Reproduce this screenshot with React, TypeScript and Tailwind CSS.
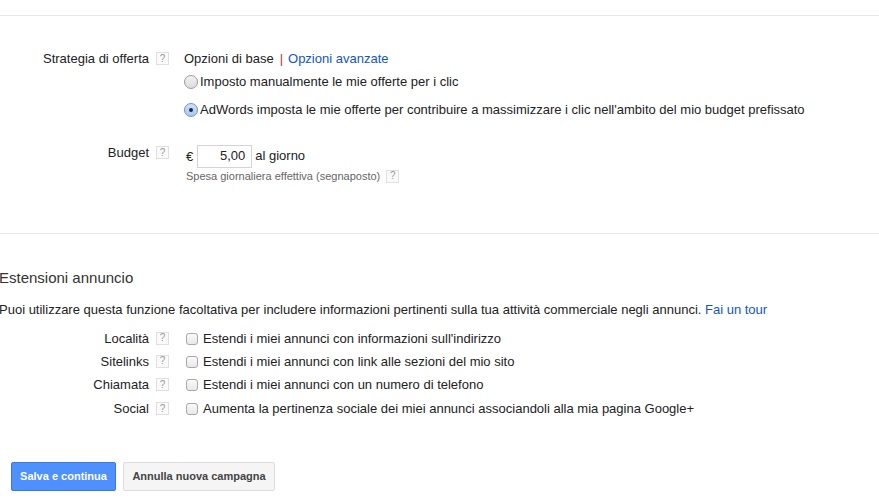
const Help = ({ className = "" }: { className?: string }) => (
  <span className={"flex h-[13px] w-[13px] shrink-0 items-center justify-center border border-[#e0e0e0] bg-[#fafafa] text-[10px] leading-none text-[#999] " + className}>?</span>
);

const Radio = ({ checked = false }: { checked?: boolean }) => (
  <span className={"flex h-[14px] w-[14px] shrink-0 items-center justify-center rounded-full border " + (checked ? "border-[#6f93c4] bg-gradient-to-b from-[#cfe0f7] to-[#a9c8f0]" : "border-[#9a9a9a] bg-gradient-to-b from-[#f2f2f2] to-[#dcdcdc]")}>
    {checked && <span className="h-[4px] w-[4px] rounded-full bg-[#1a2a44]" />}
  </span>
);

const Check = () => (
  <span className="h-[12px] w-[12px] shrink-0 rounded-[3px] border border-[#a8a8a8] bg-gradient-to-b from-[#fafafa] to-[#e8e8e8]" />
);

const ext = [
  { label: "Località", text: "Estendi i miei annunci con informazioni sull'indirizzo", h: "h-[23px]" },
  { label: "Sitelinks", text: "Estendi i miei annunci con link alle sezioni del mio sito", h: "h-[23px]" },
  { label: "Chiamata", text: "Estendi i miei annunci con un numero di telefono", h: "h-[24px]" },
  { label: "Social", text: "Aumenta la pertinenza sociale dei miei annunci associandoli alla mia pagina Google+", h: "h-[24px]" },
];

export default function App() {
  return (
    <div className="h-[501px] w-[879px] overflow-hidden bg-white text-[13px] leading-[16px] text-[#222]" style={{ fontFamily: '"Liberation Sans", Arial, sans-serif' }}>
      <div className="h-[15px]" />
      <div className="h-[219px] border-b border-[#e8e8e8] border-t pt-[35px]">
        <div className="flex">
          <div className="flex w-[169px] justify-end gap-[7px]">
            <span>Strategia di offerta</span>
            <Help className="mt-px" />
          </div>
          <div className="ml-[15px] flex flex-col">
            <div className="flex">
              <span>Opzioni di base</span>
              <span className="ml-[6px] mr-[5px] text-[#c0392b]">|</span>
              <span className="text-[#1155cc]">Opzioni avanzate</span>
            </div>
            <div className="mt-[7px] flex items-center gap-[2px]"><Radio /><span>Imposto manualmente le mie offerte per i clic</span></div>
            <div className="mt-[12px] flex items-center gap-[2px]"><Radio checked /><span>AdWords imposta le mie offerte per contribuire a massimizzare i clic nell'ambito del mio budget prefissato</span></div>
          </div>
        </div>
        <div className="mt-[27px] flex">
          <div className="flex w-[169px] justify-end gap-[7px]">
            <span>Budget</span>
            <Help className="mt-px" />
          </div>
          <div className="ml-[17px] flex flex-col">
            <div className="flex items-center">
              <span>€</span>
              <span className="ml-[4px] flex h-[23px] w-[55px] items-center justify-end border border-[#d4d4d4] pb-[1px] pr-[6px]">5,00</span>
              <span className="ml-[3px] pb-[2px]">al giorno</span>
            </div>
            <div className="flex items-center gap-[6px] text-[11px] text-[#666]">
              <span>Spesa giornaliera effettiva (segnaposto)</span>
              <Help />
            </div>
          </div>
        </div>
      </div>
      <h2 className="mt-[36px] -ml-px text-[15px] leading-[16px] font-normal text-[#333]">Estensioni annuncio</h2>
      <p className="mt-[16px] -ml-px">Puoi utilizzare questa funzione facoltativa per includere informazioni pertinenti sulla tua attività commerciale negli annunci. <span className="text-[#1155cc]">Fai un tour</span></p>
      <div className="mt-[9px] flex flex-col">
        {ext.map((e) => (
          <div key={e.label} className={"flex items-center " + e.h}>
            <div className="flex w-[169px] justify-end gap-[7px]">
              <span>{e.label}</span>
              <Help className="mt-px" />
            </div>
            <span className="ml-[17px] flex items-center gap-[5px]"><Check /><span>{e.text}</span></span>
          </div>
        ))}
      </div>
      <div className="ml-[11px] mt-[41px] flex gap-[7px] text-[11px] font-bold">
        <button className="h-[29px] w-[105px] rounded-[2px] border border-[#3b78e7] bg-[#4d90fe] pb-[2px] text-white">Salva e continua</button>
        <button className="h-[29px] w-[152px] rounded-[2px] border border-[#dcdcdc] bg-[#f5f5f5] pb-[2px] text-[#444]">Annulla nuova campagna</button>
      </div>
    </div>
  );
}
